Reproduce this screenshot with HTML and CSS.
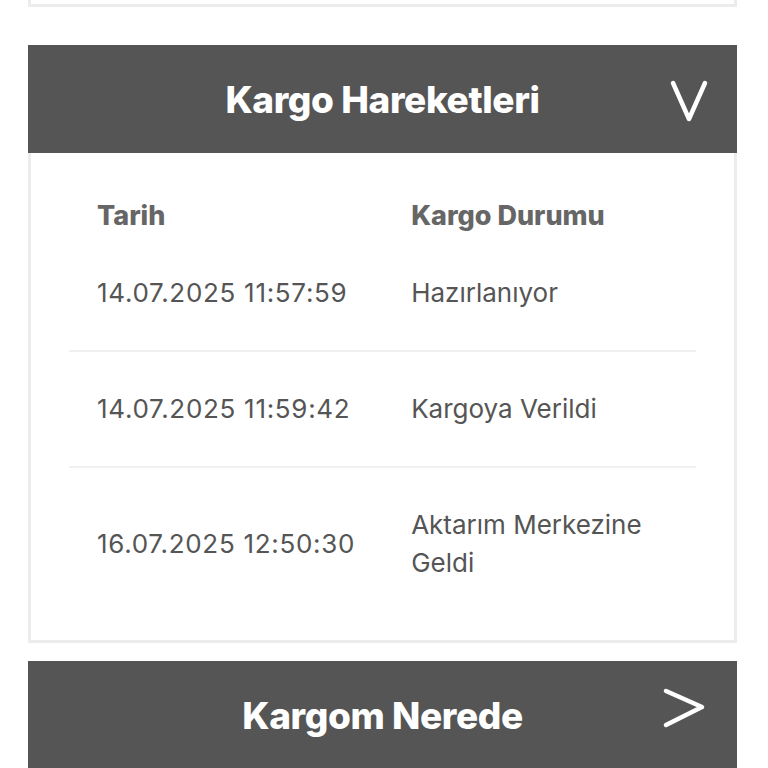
FILE: index.html
```html
<!DOCTYPE html>
<html lang="tr">
<head>
    <meta charset="UTF-8">
    <meta name="viewport" content="width=device-width, initial-scale=1.0">
    <title>Kargo Takip</title>
    <link rel="stylesheet" href="styles.css">
</head>
<body>
    <div class="page">
        <div class="prev-card"></div>

        <div class="panel">
            <div class="panel-head">
                <h2 class="panel-title">Kargo Hareketleri</h2>
                <svg class="panel-icon icon-down" viewBox="0 0 40 44" width="40" height="44">
                    <path d="M4 4 L20 40 L36 4" fill="none" stroke="#fff" stroke-width="4.5" stroke-linecap="round" stroke-linejoin="round"/>
                </svg>
            </div>
            <div class="panel-body">
                <table class="moves">
                    <thead>
                        <tr>
                            <th>Tarih</th>
                            <th>Kargo Durumu</th>
                        </tr>
                    </thead>
                    <tbody>
                        <tr>
                            <td class="date">14.07.2025 11:57:59</td>
                            <td>Hazırlanıyor</td>
                        </tr>
                        <tr>
                            <td class="date">14.07.2025 11:59:42</td>
                            <td>Kargoya Verildi</td>
                        </tr>
                        <tr>
                            <td class="date">16.07.2025 12:50:30</td>
                            <td>Aktarım Merkezine<br>Geldi</td>
                        </tr>
                    </tbody>
                </table>
            </div>
        </div>

        <div class="panel">
            <div class="panel-head">
                <h2 class="panel-title">Kargom Nerede</h2>
                <svg class="panel-icon icon-right" viewBox="0 0 46 44" width="46" height="44">
                    <path d="M5 4 L41 20 L5 38" fill="none" stroke="#fff" stroke-width="4.5" stroke-linecap="round" stroke-linejoin="round"/>
                </svg>
            </div>
        </div>
    </div>
</body>
</html>
```

FILE: styles.css
```css
body {
    margin: 0;
    background-color: #fff;
    font-family: Inter, Roboto, "Liberation Sans", Arial, sans-serif;
}

.page {
    width: 709px;
    margin-left: 28px;
}

.prev-card {
    height: 4px;
    border: 3px solid #ececec;
    border-top: 0;
}

.panel {
    margin-top: 38px;
}

.panel + .panel {
    margin-top: 18px;
}

.panel-head {
    position: relative;
    height: 108px;
    background-color: #555555;
    display: flex;
    align-items: center;
    justify-content: center;
}

.panel-title {
    margin: 0;
    color: #fff;
    font-size: 37px;
    font-weight: 800;
    letter-spacing: -0.4px;
}

.panel-icon {
    position: absolute;
}

.icon-down {
    right: 28px;
    top: 34px;
}

.icon-right {
    right: 30px;
    top: 26px;
}

.panel-body {
    border: 3px solid #ececec;
    border-top: 0;
    padding: 0 38px 20px;
}

.moves {
    width: 100%;
    border-collapse: collapse;
}

.moves th,
.moves td {
    text-align: left;
    padding: 0 28px;
    line-height: 38px;
    vertical-align: middle;
}

.moves th {
    padding-top: 44px;
    padding-bottom: 1px;
    color: #666;
    font-size: 27px;
    font-weight: 800;
}

.moves td {
    padding-top: 38px;
    padding-bottom: 38px;
    color: #555;
    font-size: 26px;
}

.moves td.date {
    letter-spacing: 0.7px;
    white-space: nowrap;
}

.moves th:first-child,
.moves td:first-child {
    width: 258px;
}

.moves tbody tr + tr {
    border-top: 2px solid #f0f0f0;
}
```
